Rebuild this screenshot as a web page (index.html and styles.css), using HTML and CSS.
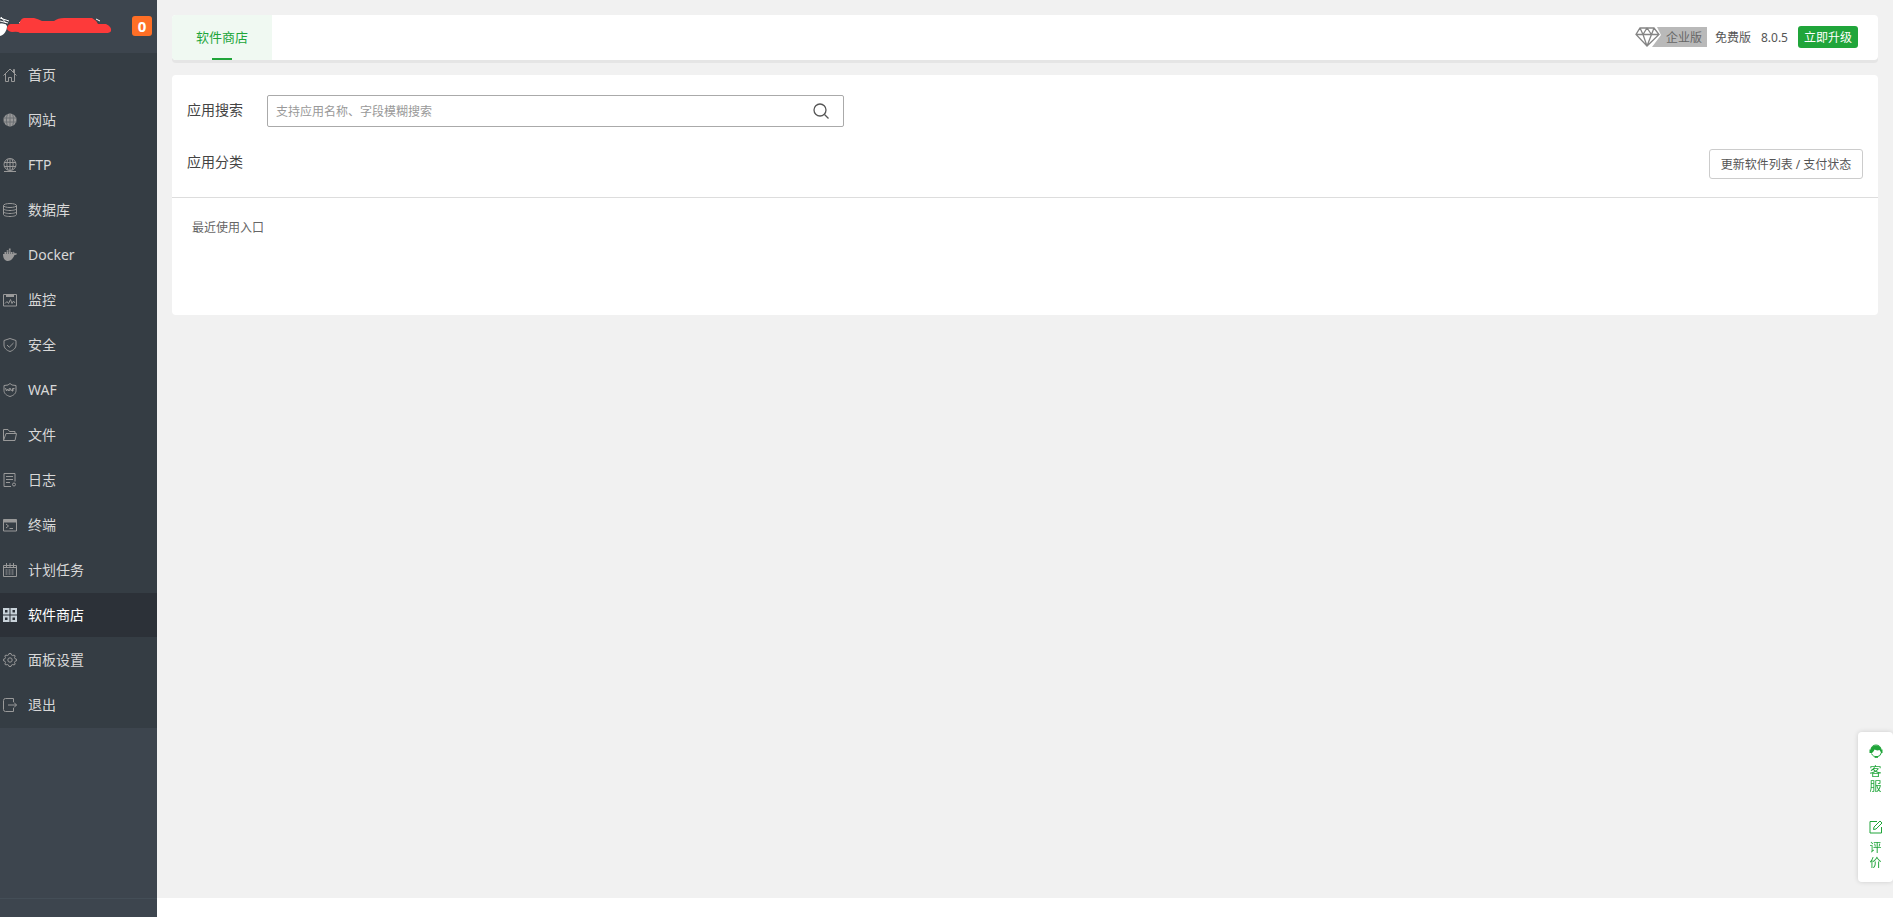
FILE: index.html
```html
<!DOCTYPE html>
<html lang="zh-CN">
<head>
  <meta charset="UTF-8">
  <meta name="viewport" content="width=device-width, initial-scale=1.0">
  <title>软件商店</title>
  <link rel="stylesheet" href="styles.css">
</head>
<body>

<div class="layout">
  <aside class="sidebar">
    <div class="sidebar-head">
      <svg class="head-mark" viewBox="0 0 112 24">
        <path d="M0 2l9 3M0 5l8 2M1 1l5 6M0 8l6 1" stroke="#fff" stroke-width="1" fill="none"/>
        <path d="M0 8c3-1 6 0 7 2c0 5-3 9-7 10z" fill="#fff"/>
        <path d="M19 7l4-3M96 3l4 2" stroke="#fff" stroke-width="1"/>
        <path d="M11 8L19 8Q21 2 24 2L34 2Q38 3 42 5L54 5Q58 2 64 2L92 2Q96 4 98 8L106 8Q112 11 111 15Q110 17 106 17L20 17Q18 15 12 16Q7 15 7 12Q8 8 11 8Z" fill="#fd3a3a"/>
      </svg>
      <span class="badge">0</span>
    </div>
    <nav>
      <ul class="menu">
        <li><a href="#"><svg viewBox="0 0 14 14"><path d="M.5 7.500L7 1l6.500 6.500M2.500 6v7.500h3v-4h3v4h3V6M10.500 4V1.500h1V5"/></svg><span>首页</span></a></li>
        <li><a href="#"><svg viewBox="0 0 14 14"><circle class="solid" cx="7" cy="7" r="6.500"/><path class="cut" d="M.5 5h13M.5 9h13M7 .5v13M4.500 1C3 5 3 9 4.500 13M9.500 1c1.500 4 1.500 8 0 12"/></svg><span>网站</span></a></li>
        <li><a href="#"><svg viewBox="0 0 14 14"><circle cx="7" cy="6.500" r="6"/><path d="M1 4.500h12M1 8.500h12M7 .5v12M5 1C3.500 5 3.500 8 5 12M9 1c1.500 4 1.500 7 0 11M1 13.500h12"/></svg><span>FTP</span></a></li>
        <li><a href="#"><svg viewBox="0 0 14 14"><ellipse cx="7" cy="2.500" rx="6.500" ry="2"/><path d="M.5 2.500v9c0 1.200 2.900 2 6.500 2s6.500-.8 6.500-2v-9M.5 5.500c0 1.200 2.900 2 6.500 2s6.500-.8 6.500-2M.5 8.500c0 1.200 2.900 2 6.500 2s6.500-.8 6.500-2"/></svg><span>数据库</span></a></li>
        <li><a href="#"><svg viewBox="0 0 14 14"><path class="solid" d="M0 6h10c.4-1 .3-1.700 0-2.500C11 4 11.500 4.500 11.600 5.400c.9-.1 1.800 0 2.400.3-.5 1-1.400 1.400-2.500 1.400C10.300 10.500 8 13 5 13 2 13 0 10.500 0 6zM1.500 4h1.700v2H1.500zM3.700 4h1.700v2H3.700zM5.900 4h1.700v2H5.900zM3.700 2.200h1.700v1.500H3.700zM5.900 2.200h1.700v1.500H5.900zM5.900.6h1.700V2H5.900zM8 4h1.500v2H8z"/></svg><span>Docker</span></a></li>
        <li><a href="#"><svg viewBox="0 0 14 14"><path d="M.5 1.500h13v11.500H.5zM2 10.500l2-2 1.500 2 2-4 1.500 4 1.500-2.500L12 10"/><path class="solid" d="M3 1.500h8v2.500H3z"/></svg><span>监控</span></a></li>
        <li><a href="#"><svg viewBox="0 0 14 14"><path d="M7 .5l6 2v4.500c0 3-2.500 5.300-6 6.500C3.500 12.300 1 10 1 7V2.500zM4 7l2.300 2.200L10.500 5"/></svg><span>安全</span></a></li>
        <li><a href="#"><svg viewBox="0 0 14 14"><path d="M7 .5l2 1.500 4 .5v5c0 3-2.500 5-6 6-3.500-1-6-3-6-6v-5L5 2z"/><path d="M2.500 5l1 3 1-2 1 2 1-3M6.500 8L7.500 5.500l1 2.500M9.500 8.500V5.500h2M9.500 7h1.500"/></svg><span>WAF</span></a></li>
        <li><a href="#"><svg viewBox="0 0 14 14"><path d="M.5 12.500v-11h4.500l1.500 2h5.500v2M.5 12.500l2.500-7h10.500l-1.500 7z"/></svg><span>文件</span></a></li>
        <li><a href="#"><svg viewBox="0 0 14 14"><path d="M8 13.500H1V.5h11v8M3 3.500h7M3 6.500h7M3 9.500h4"/><circle cx="11" cy="11.500" r="1.500"/></svg><span>日志</span></a></li>
        <li><a href="#"><svg viewBox="0 0 14 14"><path d="M.5 1.500h13v11.500H.5zM3 6l2.500 2L3 10M6.500 10.500H10"/><path class="solid" d="M.5 1.500h13V4.500H.5z"/></svg><span>终端</span></a></li>
        <li><a href="#"><svg viewBox="0 0 14 14"><path d="M.5 2.500h13v11H.5zM.5 4.500h13M3.500 0v4M7 0v4M10.500 0v4"/><path d="M2.500 7h9M2.500 9h9M2.500 11h9" stroke-dasharray="2 1"/></svg><span>计划任务</span></a></li>
        <li><a href="#" class="active"><svg viewBox="0 0 14 14"><path d="M1 1h4.500v4.500H1zM8.500 1H13v4.500H8.500zM1 8.500h4.500V13H1zM8.500 8.500H13V13H8.500z"/></svg><span>软件商店</span></a></li>
        <li><a href="#"><svg viewBox="0 0 14 14"><path d="M5.500 2L6 .5h2L8.500 2l1.300.5L11.200 2l1 1-.7 1.500.5 1.200 1.500.5v1.600l-1.500.5-.5 1.200.7 1.500-1 1-1.400-.5-1.300.5-.5 1.500H6L5.500 12l-1.300-.5L2.800 12l-1-1 .7-1.500L2 8.300.5 7.800V6.200L2 5.700l.5-1.200L1.800 3l1-1 1.400.5z"/><circle cx="7" cy="7" r="2.200"/></svg><span>面板设置</span></a></li>
        <li><a href="#"><svg viewBox="0 0 14 14"><path d="M10.500 4V.5h-8Q.5.500.5 2.500v9q0 2 2 2h8V10M5 7h8.500M11 4.500L13.500 7 11 9.500"/></svg><span>退出</span></a></li>
      </ul>
    </nav>
    <div class="sidebar-foot"></div>
  </aside>

  <main class="main">
    <div class="tabbar">
      <a href="#" class="tab">软件商店</a>
      <div class="version">
        <svg class="gem" viewBox="0 0 72 20">
          <path d="M22 0h50v20H17l9-12z" fill="#b9b9b9"/>
          <path d="M5 1h14l5 6.500L12 19 1 7.500zM1 7.500h23M5 1l3 6.500L12 19l4.500-11.500L19 1M8 7.500L12 1l4.500 6.500" fill="none" stroke="#858585" stroke-width="1.300"/>
          <text x="31" y="15">企业版</text>
        </svg>
        <span class="edition">免费版</span>
        <span class="number">8.0.5</span>
        <button type="button" class="upgrade">立即升级</button>
      </div>
    </div>

    <section class="card">
      <div class="filters">
        <div class="row">
          <label for="search">应用搜索</label>
          <div class="search-box">
            <input type="text" id="search" placeholder="支持应用名称、字段模糊搜索">
            <button type="button" class="search-btn" aria-label="搜索">
              <svg viewBox="0 0 16 16"><circle cx="7" cy="7" r="6"/><path d="M11.500 11.500L15.500 15.500"/></svg>
            </button>
          </div>
        </div>
        <div class="row types">
          <span class="types-label">应用分类</span>
          <button type="button" class="refresh">更新软件列表 / 支付状态</button>
        </div>
      </div>
      <div class="recent">最近使用入口</div>
    </section>
  </main>
</div>

<div class="service">
  <a href="#">
    <svg viewBox="0 0 14 14"><path d="M2 5.500a5 4.500 0 0 1 10 0M12.500 8.500q-1 4-5 4.500" fill="none" stroke="#20a53a"/><path d="M7 1.500c3.200 0 5 2 5.200 4h1.300v3.500H12c-.3-1-.6-2-1.500-3-2 .8-4 .2-5-.5-.5 1.500-1.500 2.500-2.500 3.500H.5V5.500h1.300C2 3.500 3.800 1.500 7 1.500z" fill="#20a53a"/><path d="M2.500 9.500c1 2.300 2.500 3 4 3M6 12.500h2.500v1.200H6z" fill="none" stroke="#20a53a"/></svg>
    <span>客服</span>
  </a>
  <a href="#">
    <svg viewBox="0 0 14 14"><path d="M8 1.500H1v11.500h11.500V7M4.500 9.500l.5-2.500L11 1l2 2-6 6z" fill="none" stroke="#20a53a"/></svg>
    <span>评价</span>
  </a>
</div>

</body>
</html>
```
FILE: styles.css
```css
* {
  margin: 0;
  padding: 0;
  box-sizing: border-box;
}
body {
  font-family: "Noto Sans", "Noto Sans CJK SC", sans-serif;
  font-size: 12px;
  color: #555;
  background: #fff;
}
a {
  text-decoration: none;
}
button, input {
  font-family: inherit;
  font-size: 12px;
}
button {
  cursor: pointer;
}
.layout {
  display: flex;
  min-height: 100vh;
}

/* sidebar */
.sidebar {
  width: 157px;
  flex-shrink: 0;
  display: flex;
  flex-direction: column;
  background: #3d454e;
}
.sidebar-head {
  height: 53px;
  padding: 16px 5px 0 0;
  display: flex;
  align-items: flex-start;
  justify-content: space-between;
}
.head-mark {
  width: 112px;
  height: 24px;
}
.badge {
  width: 20px;
  height: 20px;
  border-radius: 3px;
  background: #ff6f26;
  color: #fff;
  font-size: 15px;
  font-weight: bold;
  line-height: 20px;
  text-align: center;
}
.menu {
  list-style: none;
  background: #353d44;
}
.menu li {
  padding-bottom: 1px;
}
.menu a {
  height: 44px;
  padding-left: 3px;
  display: flex;
  align-items: center;
  gap: 11px;
  color: #d8d8d8;
  font-size: 14px;
}
.menu span {
  padding-bottom: 2px;
}
.menu a:hover,
.menu .active {
  background: #2c3138;
  color: #fff;
}
.menu svg {
  width: 14px;
  height: 14px;
  fill: none;
  stroke: #999;
}
.menu .solid {
  fill: #999;
  stroke: none;
}
.menu .cut {
  stroke: #6c7175;
}
.menu .active svg {
  stroke: #c9d3da;
  stroke-width: 2;
}
.sidebar-foot {
  height: 19px;
  margin-top: auto;
  border-top: 1px solid #444e57;
}

/* content */
.main {
  flex: 1;
  margin-bottom: 19px;
  padding: 15px;
  background: #f1f1f1;
}
.tabbar {
  height: 45px;
  margin-bottom: 15px;
  display: flex;
  justify-content: space-between;
  background: #fff;
  border-radius: 4px;
  box-shadow: 0 3px 0 #e5e5e5;
}
.tab {
  position: relative;
  width: 100px;
  line-height: 45px;
  border-radius: 4px 0 0 4px;
  background: #f0f9f2;
  color: #20a53a;
  font-size: 13px;
  text-align: center;
}
.tab::after {
  content: "";
  position: absolute;
  left: 40px;
  bottom: 0;
  width: 20px;
  height: 2px;
  background: #20a53a;
}
.version {
  display: flex;
  align-items: center;
  padding: 0 20px 1px 0;
}
.gem {
  width: 72px;
  height: 20px;
  margin-right: 8px;
}
.gem text {
  font-size: 12px;
  fill: #666;
}
.edition, .number {
  margin-right: 10px;
}
.upgrade {
  height: 22px;
  padding: 0 6px;
  border: 0;
  border-radius: 3px;
  background: #20a53a;
  color: #fff;
}
.card {
  min-height: 240px;
  background: #fff;
  border-radius: 4px;
}
.filters {
  padding: 20px 15px 18px;
  border-bottom: 1px solid #ddd;
}
.row {
  display: flex;
  color: #444;
  font-size: 14px;
}
.row label, .types-label {
  width: 80px;
  line-height: 30px;
}
.search-box {
  width: 577px;
  height: 32px;
  display: flex;
  border: 1px solid #aaa;
  border-radius: 2px;
}
.search-box input {
  flex: 1;
  padding: 0 8px;
  border: 0;
  outline: 0;
  background: none;
  color: #555;
}
.search-box input::placeholder {
  color: #999;
}
.search-btn {
  width: 44px;
  border: 0;
  background: none;
}
.search-btn svg {
  width: 16px;
  height: 16px;
  display: block;
  margin: 0 auto;
  fill: none;
  stroke: #555;
  stroke-width: 1.3;
}
.types {
  margin-top: 20px;
  justify-content: space-between;
}
.refresh {
  height: 30px;
  min-width: 154px;
  margin-top: 2px;
  padding: 0 10px;
  border: 1px solid #ccc;
  border-radius: 3px;
  background: #fff;
  color: #555;
}
.recent {
  padding: 20px;
  line-height: 20px;
  color: #666;
}

/* floating service box */
.service {
  position: fixed;
  right: 0;
  bottom: 35px;
  width: 35px;
  height: 150px;
  padding: 12px 0;
  border-radius: 4px;
  background: #fff;
  box-shadow: 0 0 5px rgba(0, 0, 0, 0.15);
}
.service a {
  height: 76px;
  display: flex;
  flex-direction: column;
  align-items: center;
  gap: 6px;
  color: #20a53a;
}
.service svg {
  width: 14px;
  height: 14px;
}
.service span {
  width: 12px;
  line-height: 15px;
}
```
